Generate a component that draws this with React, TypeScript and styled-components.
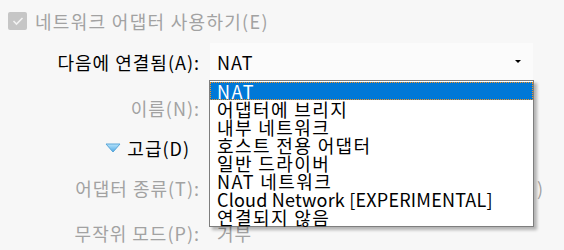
import styled, { createGlobalStyle } from 'styled-components';

const GlobalStyle = createGlobalStyle`
  body {
    margin: 0;
    background: #f7f7f7;
    font-family: "Noto Sans CJK KR", "Noto Sans", sans-serif;
    font-size: 18px;
    letter-spacing: 1px;
  }
`;

const Page = styled.div`
  width: 564px;
  height: 250px;
  overflow: hidden;
  padding-left: 8px;
  box-sizing: border-box;
`;

const CheckRow = styled.div`
  display: flex;
  align-items: center;
  height: 36px;
  margin-top: 3px;
`;

const CheckBox = styled.div`
  width: 19px;
  height: 18px;
  border-radius: 2px;
  background: #c6c6c6;
  display: flex;
  align-items: center;
  justify-content: center;
`;

const CheckLabel = styled.span`
  margin-left: 8px;
  color: #a2a2a2;
  white-space: nowrap;
  letter-spacing: 1.3px;
`;

const Row = styled.div<{ $h: number; $mt: number }>`
  display: grid;
  grid-template-columns: 192px 1fr;
  column-gap: 10px;
  align-items: center;
  height: ${(p) => p.$h}px;
  margin-top: ${(p) => p.$mt}px;
`;

const Label = styled.span<{ $muted?: boolean }>`
  justify-self: end;
  white-space: nowrap;
  color: ${(p) => (p.$muted ? '#a2a2a2' : '#000')};
`;

const Expander = styled.span`
  justify-self: end;
  display: flex;
  align-items: center;
  gap: 6px;
  padding-right: 10px;
  white-space: nowrap;
`;

const Value = styled.span`
  padding-left: 7px;
  color: #a2a2a2;
  white-space: nowrap;
`;

const BehindEnd = styled.span`
  justify-self: end;
  margin-right: 20px;
  color: #a2a2a2;
`;

const Combo = styled.div`
  position: relative;
  width: 323px;
  height: 37px;
  background: #fbfbfb;
  display: flex;
  align-items: center;
  justify-content: space-between;
  padding: 0 12px 0 7px;
  box-sizing: border-box;
`;

const Dropdown = styled.ul`
  position: absolute;
  top: 100%;
  left: -1px;
  width: 325px;
  margin: 0;
  padding: 1px 0 0;
  list-style: none;
  background: #fff;
  border: 1px solid #7e7e7e;
  box-sizing: border-box;
  box-shadow: 3px 3px 3px rgba(0, 0, 0, 0.28);
  z-index: 2;
`;

const Item = styled.li<{ $selected?: boolean; $latin?: boolean }>`
  height: 18px;
  line-height: 18px;
  padding-left: 7px;
  white-space: nowrap;
  letter-spacing: ${(p) => (p.$latin ? '0.2px' : '1.4px')};
  color: ${(p) => (p.$selected ? '#fff' : '#000')};
  background: ${(p) => (p.$selected ? '#0078d7' : 'transparent')};
  outline: ${(p) => (p.$selected ? '1px dotted #f7931e' : 'none')};
  outline-offset: -1px;
`;

const options = [
  'NAT',
  '어댑터에 브리지',
  '내부 네트워크',
  '호스트 전용 어댑터',
  '일반 드라이버',
  'NAT 네트워크',
  'Cloud Network [EXPERIMENTAL]',
  '연결되지 않음',
];

function Triangle() {
  return (
    <svg width="16" height="10" viewBox="0 0 16 10">
      <defs>
        <linearGradient id="tri" x1="0" y1="0" x2="0" y2="1">
          <stop offset="0" stopColor="#b8e4fb" />
          <stop offset="1" stopColor="#4fa9e6" />
        </linearGradient>
      </defs>
      <path d="M1 1 H15 L8 9 Z" fill="url(#tri)" stroke="#5aa6d8" strokeWidth="1" strokeLinejoin="round" />
    </svg>
  );
}

export default function App() {
  return (
    <Page>
      <GlobalStyle />
      <CheckRow>
        <CheckBox>
          <svg width="12" height="10" viewBox="0 0 12 10">
            <path d="M1.5 5 L4.5 8 L10.5 2" fill="none" stroke="#f2f2f2" strokeWidth="1.6" />
          </svg>
        </CheckBox>
        <CheckLabel>네트워크 어댑터 사용하기(E)</CheckLabel>
      </CheckRow>

      <Row $h={37} $mt={4}>
        <Label>다음에 연결됨(A):</Label>
        <Combo>
          <span>NAT</span>
          <svg width="6" height="3" viewBox="0 0 6 3">
            <path d="M0 0 H6 L3 3 Z" fill="#000" />
          </svg>
          <Dropdown>
            {options.map((o, i) => (
              <Item key={o} $selected={i === 0} $latin={o.startsWith('Cloud')}>
                {o}
              </Item>
            ))}
          </Dropdown>
        </Combo>
      </Row>

      <Row $h={40} $mt={8}>
        <Label $muted>이름(N):</Label>
      </Row>

      <Row $h={40} $mt={0}>
        <Expander>
          <Triangle />
          고급(D)
        </Expander>
      </Row>

      <Row $h={40} $mt={0}>
        <Label $muted>어댑터 종류(T):</Label>
        <BehindEnd>)</BehindEnd>
      </Row>

      <Row $h={40} $mt={5}>
        <Label $muted>무작위 모드(P):</Label>
        <Value>거부</Value>
      </Row>
    </Page>
  );
}
